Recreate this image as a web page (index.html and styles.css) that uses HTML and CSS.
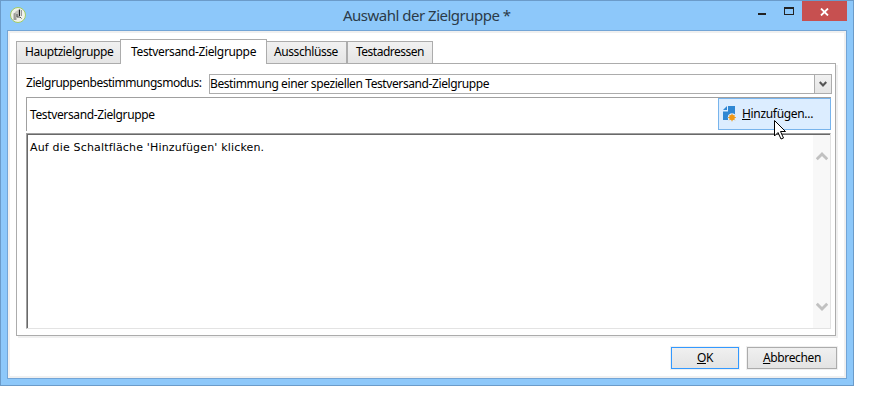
FILE: index.html
```html
<!DOCTYPE html>
<html lang="de">
<head>
<meta charset="utf-8">
<title>Auswahl der Zielgruppe</title>
<link rel="stylesheet" href="styles.css">
</head>
<body>
<div class="window">
  <header class="titlebar">
    <svg class="app-icon" width="18" height="18" viewBox="0 0 18 18">
      <circle cx="9" cy="9" r="7.5" fill="#f0f2ea" stroke="#a3cc62" stroke-width="1"/>
      <path d="M4.500 7.500l3-1.500v8h-3z" fill="#9d9d98"/><path d="M6.500 5.500l3.500-2v7l-3.500 1z" fill="#c4c4be"/>
      <path d="M10.500 3.500v6.500" fill="none" stroke="#222" stroke-width="1.200"/>
      <path d="M8 8v3h3l1.500 1.500" fill="none" stroke="#555"/>
      <path d="M12.500 4v6" stroke="#999"/>
    </svg>
    <h1 class="title"><span>Auswahl der Zielgruppe *</span></h1>
    <div class="controls">
      <svg class="minmax" width="40" height="20" viewBox="0 0 40 20" shape-rendering="crispEdges">
        <path d="M0 12h8v2H0z" fill="#222"/>
        <path d="M26 6h10v8H26zM27 8v5h8V8z" fill="#222" fill-rule="evenodd"/>
      </svg>
      <div class="close"><svg width="9" height="8" viewBox="0 0 9 8"><path d="M1 .5l7 7M8 .5l-7 7" stroke="#fff" stroke-width="1.8"/></svg></div>
    </div>
  </header>
  <main class="client">
    <nav class="tabs">
      <div class="tab t1"><span>Hauptzielgruppe</span></div>
      <div class="tab t2 active"><span>Testversand-Zielgruppe</span></div>
      <div class="tab t3"><span>Ausschlüsse</span></div>
      <div class="tab t4"><span>Testadressen</span></div>
    </nav>
    <section class="panel">
      <div class="mode">
        <label><span>Zielgruppenbestimmungsmodus:</span></label>
        <div class="combo">
          <span class="value">Bestimmung einer speziellen Testversand-Zielgruppe</span>
          <div class="arrow"><svg width="8" height="7" viewBox="0 0 8 7"><path d="M.7 1L4 4.500 7.300 1" fill="none" stroke="#555" stroke-width="2.200"/></svg></div>
        </div>
      </div>
      <div class="toolbar">
        <span class="caption">Testversand-Zielgruppe</span>
        <div class="add">
          <svg width="14" height="17" viewBox="0 0 14 17">
            <path d="M5 0h7v8H8l-3 2v4H0V5.500h5z" fill="#2f87d3"/>
            <path d="M0 4L4 0v4z" fill="#2f87d3"/>
            <circle cx="9" cy="11.500" r="4.200" fill="#dcedff"/>
            <circle cx="9" cy="11.500" r="2.800" fill="#f09814"/>
            <path d="M9 7.700v7.600M5.200 11.500h7.600M6.300 8.800l5.400 5.400M11.700 8.800l-5.400 5.400" stroke="#f09814"/>
          </svg>
          <span class="addtext"><u>H</u>inzufügen...</span>
        </div>
      </div>
      <div class="list">
        <p><span>Auf die Schaltfläche 'Hinzufügen' klicken.</span></p>
        <div class="scroll">
          <svg width="12" height="10" viewBox="0 0 12 10"><path d="M.7 8.300L6 3l5.300 5.300" fill="none" stroke="#c1c1c1" stroke-width="3"/></svg>
          <svg width="12" height="10" viewBox="0 0 12 10"><path d="M.7 1.700L6 7l5.300-5.300" fill="none" stroke="#c1c1c1" stroke-width="3"/></svg>
        </div>
      </div>
    </section>
    <footer class="actions">
      <div class="btn ok"><span><u>O</u>K</span></div>
      <div class="btn cancel"><span><u>A</u>bbrechen</span></div>
    </footer>
  </main>
  <svg class="cursor" width="13" height="20" viewBox="0 0 13 20"><path d="M.5.500v15.500l3.500-3.500 3 6.500 2.500-1-3-6.500h5z" fill="#fff" stroke="#000"/></svg>
</div>
</body>
</html>
```
FILE: styles.css
```css
* { box-sizing: border-box; }
body { margin: 0; background: #fff; color: #000; font: 12px/16px "Noto Sans", "Open Sans", sans-serif; }
svg { display: block; flex: none; }
span { white-space: nowrap; }
u { text-decoration: underline 1px; text-underline-offset: 1px; text-decoration-skip-ink: none; }
.window { position: relative; width: 854px; height: 386px; border: 1px solid #6b9bc9; background: #8dc8fa; padding: 0 6px 6px; }
.titlebar { height: 29px; display: flex; align-items: flex-start; }
.app-icon { margin: 5px 0 0 2px; }
.title { flex: 1; margin: 4px 0 0 316px; font-size: 15px; line-height: 20px; font-weight: 400; color: #2b3b49; letter-spacing: -.5px; }
.controls { display: flex; }
.minmax { margin-right: 4px; }
.close { width: 45px; height: 20px; background: #c75050; display: flex; align-items: center; justify-content: center; padding-top: 2px; }
.client { height: 349px; background: #fff; border: 1px solid #73a5d6; box-shadow: inset 0 0 0 2px #f0f0f0; padding: 8px 9px 0 8px; }
.tabs { height: 24px; display: flex; align-items: flex-end; }
.tab { height: 22px; border: 1px solid #acacac; border-bottom: 0; background: linear-gradient(#f1f1f1, #e5e5e5); padding: 2px 0 0 8px; letter-spacing: -.42px; }
.t1 { width: 104px; border-right: 0; }
.t2 { width: 147px; padding-left: 10px; letter-spacing: -.35px; }
.t3 { width: 80px; border-left: 0; padding-left: 7px; }
.t4 { width: 86px; letter-spacing: -.5px; }
.active { height: 25px; background: #fff; padding-top: 4px; margin-bottom: -1px; }
.panel { height: 273px; width: 820px; border: 1px solid #acacac; box-shadow: 2px 2px 0 #f0f0f0; padding: 10px 3px 0 9px; }
.mode { display: flex; height: 20px; margin-bottom: 3px; }
.mode label { width: 183px; flex: none; padding-top: 1px; letter-spacing: -.46px; }
.combo { width: 623px; border: 1px solid #acacac; display: flex; justify-content: space-between; line-height: 18px; letter-spacing: -.4px; }
.arrow { width: 17px; background: linear-gradient(#f1f1f1, #e5e5e5); border-left: 1px solid #acacac; display: flex; align-items: center; justify-content: center; }
.toolbar { width: 805px; height: 34px; border-top: 1px solid #a0a0a0; border-left: 1px solid #a0a0a0; padding-left: 3px; display: flex; justify-content: space-between; }
.caption { line-height: 34px; letter-spacing: -.37px; }
.add { width: 113px; height: 32px; border: 1px solid #78b4ec; background: #dcedff; display: flex; padding: 7px 0 0 4px; gap: 5px; letter-spacing: -.32px; }
.list { width: 805px; height: 196px; margin-top: 2px; border: 1px solid #e3e3e3; border-top-color: #a0a0a0; border-left-color: #a0a0a0; box-shadow: inset 1px 1px 0 #696969; display: flex; justify-content: space-between; padding: 1px 0 0 3px; }
.list p { margin: 5px 0 0; font: 11px/16px "DejaVu Sans", sans-serif; letter-spacing: .17px; }
.scroll { width: 17px; background: #f8f8f8; display: flex; flex-direction: column; align-items: center; justify-content: space-between; padding: 16px 0; }
.actions { display: flex; justify-content: flex-end; gap: 8px; margin-top: 11px; }
.btn { height: 22px; border: 1px solid #acacac; box-shadow: 0 0 0 1px #f0f0f0; background: linear-gradient(#f0f0f0, #e3e3e3); text-align: center; padding-top: 2px; letter-spacing: -.35px; }
.ok { width: 68px; border-color: #3399ff; }
.cancel { width: 90px; }
.cursor { position: absolute; left: 773px; top: 119px; }
```
